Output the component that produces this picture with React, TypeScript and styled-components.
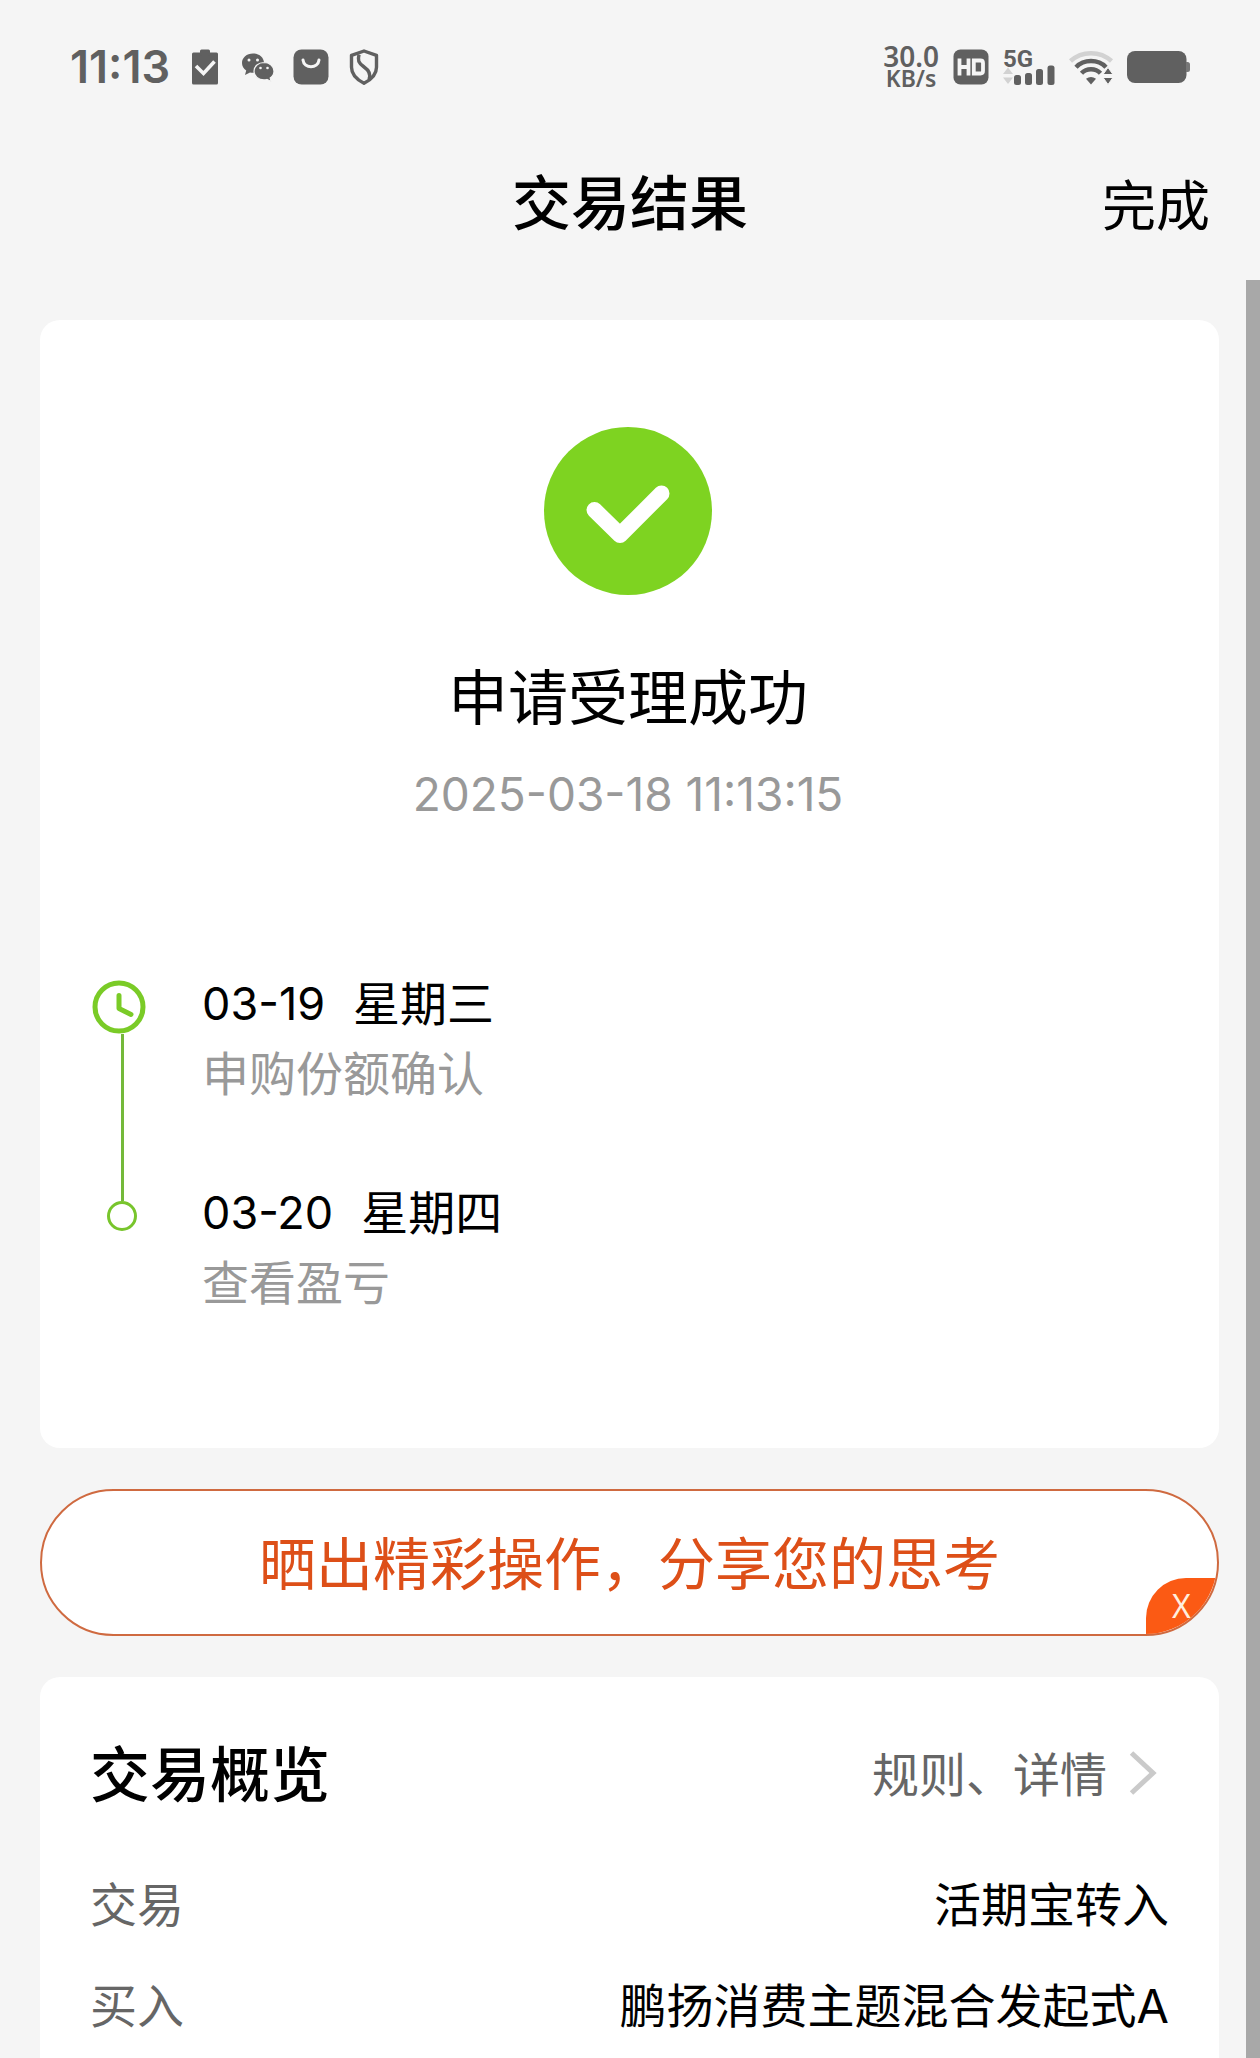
import React from "react";
import styled, { createGlobalStyle } from "styled-components";

const INK = "#606060";
const PAPER = "#f5f5f5";

const GlobalStyle = createGlobalStyle`
  *, *::before, *::after { box-sizing: border-box; }
  body {
    margin: 0;
    background: ${PAPER};
    color: #000;
    font-family: Inter, "Noto Sans CJK SC", sans-serif;
    font-size: 47px;
  }
  h1, h2, p, ol, dl, dd, dt { margin: 0; padding: 0; font-weight: 400; }
  ol { list-style: none; }
  button {
    margin: 0;
    padding: 0;
    border: 0;
    background: none;
    color: inherit;
    font: inherit;
    cursor: pointer;
  }
  svg { display: block; flex: none; overflow: visible; }
`;

const Page = styled.div`
  display: flex;
  flex-direction: column;
  min-height: 100vh;
`;

const StatusBar = styled.div`
  display: flex;
  align-items: center;
  justify-content: space-between;
  height: 134px;
  padding: 0 70px;
  color: ${INK};
`;

const StatusGroup = styled.div<{ $gap: number }>`
  display: flex;
  align-items: center;
  gap: ${(p) => p.$gap}px;
`;

const Clock = styled.span`
  font-size: 45px;
  font-weight: 600;
  line-height: 44px;
`;

const NetSpeed = styled.div`
  display: flex;
  flex-direction: column;
  align-items: center;
  font-family: "Noto Sans", sans-serif;
  font-weight: 600;
`;

const SpeedLine = styled.span<{ $size: number }>`
  font-size: ${(p) => p.$size}px;
  line-height: 22px;
`;

const TitleBar = styled.header`
  display: grid;
  grid-template-columns: 1fr auto 1fr;
  align-items: center;
  height: 140px;
  margin-bottom: 6px;
  padding: 0 50px;
`;

const Title = styled.h1`
  grid-column: 2;
  font-size: 59px;
  font-weight: 500;
  line-height: 80px;
`;

const DoneButton = styled.button`
  justify-self: end;
  padding-top: 6px;
  font-size: 54px;
  line-height: 80px;
`;

const Body = styled.div`
  display: flex;
  flex: 1;
`;

const Main = styled.main`
  display: flex;
  flex: 1;
  flex-direction: column;
  gap: 41px;
  min-width: 0;
  padding: 40px 27px 0 40px;
`;

const ScrollThumb = styled.div`
  width: 14px;
  background: #a8a8a8;
`;

const Card = styled.section`
  padding: 107px 52px 130px;
  border-radius: 20px;
  background: #fff;
`;

const OverviewCard = styled(Card)`
  flex: 1;
  padding: 36px 50px 0;
  border-radius: 20px 20px 0 0;
`;

const Result = styled.div`
  display: flex;
  flex-direction: column;
  align-items: center;
  padding-right: 3px;
`;

const ResultTitle = styled.h2`
  margin-top: 58px;
  font-size: 60px;
  line-height: 90px;
`;

const ResultTime = styled.time`
  margin-top: 16px;
  color: #999;
  font-size: 46px;
  line-height: 70px;
`;

const Timeline = styled.ol`
  margin-top: 140px;
`;

const Step = styled.li`
  display: flex;
  gap: 50px;
`;

const Rail = styled.div<{ $top: number }>`
  display: flex;
  flex-direction: column;
  align-items: center;
  width: 60px;
  padding-top: ${(p) => p.$top}px;
`;

const RailClock = styled.div`
  align-self: flex-start;
`;

const RailLine = styled.div<{ $height?: number }>`
  flex: ${(p) => (p.$height ? "none" : 1)};
  width: 3px;
  height: ${(p) => (p.$height ? `${p.$height}px` : "auto")};
  background: #74b93a;
`;

const RailDot = styled.div`
  width: 30px;
  height: 30px;
  border: 3px solid #78c52c;
  border-radius: 50%;
`;

const StepText = styled.div<{ $last?: boolean }>`
  padding-bottom: ${(p) => (p.$last ? 0 : 69)}px;
  line-height: 70px;
`;

const StepDate = styled.p`
  display: flex;
  gap: 28px;
`;

const StepDay = styled.span`
  font-size: 45px;
`;

const StepNote = styled.p`
  color: #999;
`;

const Banner = styled.div`
  position: relative;
  height: 147px;
  overflow: hidden;
  border: 2px solid #cf6a40;
  border-radius: 74px;
  background: #fff;
`;

const ShareButton = styled.button`
  width: 100%;
  height: 100%;
  padding-bottom: 6px;
  color: #dd4f18;
  font-size: 57px;
`;

const CloseButton = styled.button`
  position: absolute;
  right: 0;
  bottom: 0;
  width: 71px;
  height: 56px;
  border-radius: 40px 0 0 0;
  background: #fb5a14;
  color: #ffeedd;
  font-family: "Noto Sans", sans-serif;
  font-size: 32px;
  line-height: 56px;
`;

const OverviewHead = styled.div`
  display: flex;
  align-items: center;
  justify-content: space-between;
  height: 120px;
  margin-bottom: 21px;
`;

const OverviewTitle = styled.h2`
  padding-bottom: 6px;
  font-size: 60px;
  font-weight: 500;
`;

const RulesLink = styled.a`
  display: flex;
  align-items: center;
  gap: 21px;
  padding-right: 13px;
  color: #666;
  text-decoration: none;
`;

const RulesText = styled.span`
  padding-bottom: 4px;
`;

const Row = styled.div`
  display: flex;
  justify-content: space-between;
  line-height: 101px;
`;

const RowLabel = styled.dt`
  color: #666;
`;

const RowValue = styled.dd`
  text-align: right;
`;

const ClipboardIcon = () => (
  <svg width="36" height="36" viewBox="0 0 36 36" aria-hidden="true">
    <rect x="5" y="3.500" width="26" height="32" rx="1.500" fill={INK} />
    <rect x="13" y=".5" width="10" height="6" rx="1.500" fill={INK} />
    <path d="M9 17l7.500 7.500L27.500 12.500" fill="none" stroke={PAPER} strokeWidth="3.600" />
  </svg>
);

const WechatIcon = () => (
  <svg width="36" height="36" viewBox="0 0 36 36" aria-hidden="true">
    <path d="M13 4.500C6.700 4.500 2 8.700 2 14c0 3.100 1.600 5.700 4.200 7.500L5 26l5-2.600c1 .2 2 .3 3 .3 6.300 0 11-4.300 11-9.700S19.300 4.500 13 4.500z" fill={INK} />
    <path d="M24 13.500c-5.600 0-10 3.900-10 8.700s4.400 8.700 10 8.700c1 0 2-.1 2.900-.4l4.300 2-1-3.600c2.300-1.600 3.800-4 3.800-6.700 0-4.800-4.400-8.700-10-8.700z" fill={INK} stroke={PAPER} strokeWidth="1.200" />
    <g fill={PAPER}>
      <circle cx="9" cy="11" r="1.500" />
      <circle cx="17.500" cy="11" r="1.500" />
      <circle cx="20.500" cy="19" r="1.300" />
      <circle cx="27.500" cy="19" r="1.300" />
    </g>
  </svg>
);

const BagIcon = () => (
  <svg width="36" height="36" viewBox="0 0 36 36" aria-hidden="true">
    <rect x=".5" y=".5" width="35" height="35" rx="8" fill={INK} />
    <path d="M10 11c1 9 15 9 16 0" fill="none" stroke={PAPER} strokeWidth="3" strokeLinecap="round" />
  </svg>
);

const ShieldIcon = () => (
  <svg width="36" height="36" viewBox="0 0 36 36" aria-hidden="true">
    <g fill="none" stroke={INK} strokeWidth="3.400" strokeLinejoin="round">
      <path d="M18 2l12.500 4.300v12c0 7-5 12.200-12.500 16C10.500 30.500 5.500 25.300 5.500 18.300v-12z" />
      <path d="M13 5.500c-1.500 6-.5 8.500 4.500 12s8 7.500 5.500 13" />
    </g>
  </svg>
);

const HdIcon = () => (
  <svg width="36" height="36" viewBox="0 0 36 36" role="img" aria-label="HD">
    <rect x=".5" y=".5" width="35" height="35" rx="7" fill={INK} />
    <g fill="none" stroke={PAPER} strokeWidth="3.800">
      <path d="M6.500 9.500v17M15.500 9.500v17M6.500 18h9" />
      <path d="M20.800 11.500h6.700q2.500 0 2.500 2.500v8q0 2.500-2.500 2.500h-6.700z" />
    </g>
  </svg>
);

const SignalIcon = () => (
  <svg width="52" height="36" viewBox="0 0 52 36" aria-hidden="true">
    <text x="0" y="18" fill={INK} fontFamily="Roboto, sans-serif" fontSize="24" fontWeight="700">5G</text>
    <path d="M5 18.500l5 6.500H0zM5 35l5-6.500H0z" fill="#d2d2d2" />
    <g fill={INK}>
      <rect x="11" y="26" width="7" height="10" rx="2.500" />
      <rect x="22" y="24" width="7" height="12" rx="2.500" />
      <rect x="33" y="20" width="7" height="16" rx="2.500" />
      <rect x="44.500" y="16.500" width="7" height="19.500" rx="2.500" />
    </g>
  </svg>
);

const WifiIcon = () => (
  <svg width="44" height="36" viewBox="0 0 44 36" aria-hidden="true">
    <g fill="none" strokeWidth="4.500">
      <path d="M1.500 12C13 1.500 31 1.500 42.500 12" stroke="#d2d2d2" />
      <path d="M7 18.200C15 10 29 10 37 18.200" stroke={INK} />
      <path d="M12.500 24.200C17.500 18.800 26.500 18.800 31.500 24.200" stroke={INK} />
    </g>
    <path d="M17 29.800q5-3.800 10 0L22 35.500z" fill={INK} />
    <path d="M39 18.500l5 7H34zM39 35.500l5-7H34z" fill={INK} stroke={PAPER} strokeWidth="1" />
  </svg>
);

const BatteryIcon = () => (
  <svg width="63" height="32" viewBox="0 0 63 32" aria-hidden="true">
    <rect width="59.500" height="32" rx="8" fill={INK} />
    <path d="M59 11h1.500q2.500 0 2.500 2.500v5q0 2.500-2.500 2.500H59z" fill="#777" />
  </svg>
);

const SuccessIcon = () => (
  <svg width="168" height="168" viewBox="0 0 168 168" aria-hidden="true">
    <circle cx="84" cy="84" r="84" fill="#7ed321" />
    <path d="M50.500 83L76 108l41.500-41.500" fill="none" stroke="#fff" strokeWidth="16" strokeLinecap="round" strokeLinejoin="round" />
  </svg>
);

const StepClockIcon = () => (
  <svg width="54" height="54" viewBox="0 0 54 54" aria-hidden="true">
    <g fill="none" stroke="#7acb27" strokeWidth="5">
      <circle cx="27" cy="27" r="24" />
      <path d="M27 15.500v13l12 6" strokeLinecap="round" strokeLinejoin="round" />
    </g>
  </svg>
);

const ChevronIcon = () => (
  <svg width="28" height="46" viewBox="0 0 28 46" aria-hidden="true">
    <path d="M3.500 3L25 23 3.500 43" fill="none" stroke="#cacaca" strokeWidth="5" />
  </svg>
);

const details = [
  { label: "交易", value: "活期宝转入" },
  { label: "买入", value: "鹏扬消费主题混合发起式A" },
];

export default function App() {
  return (
    <Page>
      <GlobalStyle />
      <StatusBar>
        <StatusGroup $gap={17}>
          <Clock>11:13</Clock>
          <ClipboardIcon />
          <WechatIcon />
          <BagIcon />
          <ShieldIcon />
        </StatusGroup>
        <StatusGroup $gap={14}>
          <NetSpeed>
            <SpeedLine $size={28}>30.0</SpeedLine>
            <SpeedLine $size={23}>KB/s</SpeedLine>
          </NetSpeed>
          <HdIcon />
          <SignalIcon />
          <WifiIcon />
          <BatteryIcon />
        </StatusGroup>
      </StatusBar>
      <TitleBar>
        <Title>交易结果</Title>
        <DoneButton type="button">完成</DoneButton>
      </TitleBar>
      <Body>
        <Main>
          <Card>
            <Result>
              <SuccessIcon />
              <ResultTitle>申请受理成功</ResultTitle>
              <ResultTime dateTime="2025-03-18T11:13:15">2025-03-18 11:13:15</ResultTime>
            </Result>
            <Timeline>
              <Step>
                <Rail $top={11}>
                  <RailClock>
                    <StepClockIcon />
                  </RailClock>
                  <RailLine />
                </Rail>
                <StepText>
                  <StepDate>
                    <StepDay>03-19</StepDay>
                    <span>星期三</span>
                  </StepDate>
                  <StepNote>申购份额确认</StepNote>
                </StepText>
              </Step>
              <Step>
                <Rail $top={0}>
                  <RailLine $height={23} />
                  <RailDot />
                </Rail>
                <StepText $last>
                  <StepDate>
                    <StepDay>03-20</StepDay>
                    <span>星期四</span>
                  </StepDate>
                  <StepNote>查看盈亏</StepNote>
                </StepText>
              </Step>
            </Timeline>
          </Card>
          <Banner>
            <ShareButton type="button">晒出精彩操作，分享您的思考</ShareButton>
            <CloseButton type="button" aria-label="关闭">X</CloseButton>
          </Banner>
          <OverviewCard>
            <OverviewHead>
              <OverviewTitle>交易概览</OverviewTitle>
              <RulesLink href="#rules">
                <RulesText>规则、详情</RulesText>
                <ChevronIcon />
              </RulesLink>
            </OverviewHead>
            <dl>
              {details.map((item) => (
                <Row key={item.label}>
                  <RowLabel>{item.label}</RowLabel>
                  <RowValue>{item.value}</RowValue>
                </Row>
              ))}
            </dl>
          </OverviewCard>
        </Main>
        <ScrollThumb />
      </Body>
    </Page>
  );
}
